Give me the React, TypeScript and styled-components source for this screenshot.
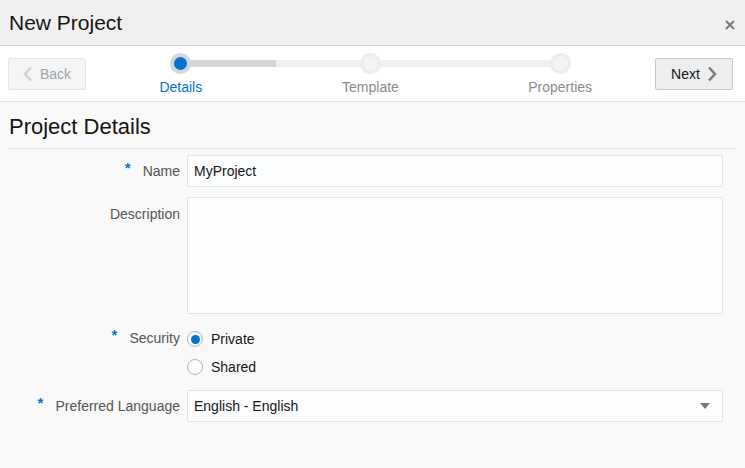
import styled, { createGlobalStyle } from 'styled-components';

const GlobalStyle = createGlobalStyle`
  html, body {
    margin: 0;
    padding: 0;
    background: #f9f9f9;
    font-family: "Liberation Sans", Arial, sans-serif;
    color: #161513;
  }
`;

interface IStep {
  title: string;
  state: 'current' | 'todo';
}

const STEPS: IStep[] = [
  { title: 'Details', state: 'current' },
  { title: 'Template', state: 'todo' },
  { title: 'Properties', state: 'todo' },
];

const Page = styled.div`
  width: 745px;
  height: 468px;
  background: #f9f9f9;
  overflow: hidden;
`;

const Header = styled.header`
  height: 45px;
  display: flex;
  align-items: center;
  justify-content: space-between;
  padding: 0 10px 0 9px;
  background: #f0f0f0;
  border-bottom: 1px solid #cdd5dc;
`;

const Title = styled.h1`
  margin: 0;
  font-size: 21px;
  font-weight: 400;
  color: #161513;
`;

const Close = styled.span`
  display: flex;
  margin-top: 4px;
  color: #7a7a7a;
`;

const Train = styled.div`
  height: 56px;
  display: flex;
  align-items: flex-start;
  padding: 12px 12px 0 8px;
  box-sizing: border-box;
  background: #fff;
  border-bottom: 1px solid #dfe3e6;
`;

const NavButton = styled.button<{ $disabled?: boolean }>`
  width: 78px;
  height: 32px;
  display: flex;
  align-items: center;
  justify-content: center;
  gap: 7px;
  padding: 0;
  font-family: inherit;
  font-size: 14px;
  border-radius: 2px;
  border: 1px solid ${(p) => (p.$disabled ? '#e4e7ea' : '#c6cbd0')};
  background: ${(p) => (p.$disabled ? '#f4f5f7' : '#eceef0')};
  color: ${(p) => (p.$disabled ? '#a3a3a3' : '#161513')};
  svg {
    color: ${(p) => (p.$disabled ? '#d2d2d2' : '#7a7a7a')};
  }
`;

const Steps = styled.div`
  flex: 1;
  display: grid;
  grid-template-columns: repeat(3, 1fr);
  position: relative;
`;

const Track = styled.div`
  position: absolute;
  top: 2px;
  left: 16.66%;
  right: 16.66%;
  height: 7px;
  background: #f0f0f0;
`;

const TrackFill = styled.div`
  width: 25%;
  height: 100%;
  background: #d6d6d6;
`;

const Step = styled.div`
  display: flex;
  flex-direction: column;
  align-items: center;
  position: relative;
  top: -5px;
`;

const Dot = styled.div<{ $current: boolean }>`
  width: 21px;
  height: 21px;
  border-radius: 50%;
  box-sizing: border-box;
  background: ${(p) => (p.$current ? '#0572ce' : '#f0f3f7')};
  border: ${(p) => (p.$current ? '4px solid #d6d6d6' : '3px solid #ececec')};
`;

const StepLabel = styled.span<{ $current: boolean }>`
  margin-top: 5px;
  font-size: 14px;
  color: ${(p) => (p.$current ? '#0572ce' : '#8b8b8b')};
`;

const Content = styled.main`
  padding: 10px 22px 0 8px;
`;

const SectionTitle = styled.h2`
  margin: 0 -13px 0 0;
  padding: 2px 0 8px 1px;
  font-size: 22px;
  font-weight: 400;
  color: #161513;
  border-bottom: 1px solid #dfe3e6;
`;

const Form = styled.div`
  display: grid;
  grid-template-columns: 172px 1fr;
  column-gap: 7px;
  row-gap: 10px;
  padding-top: 6px;
`;

const Label = styled.label<{ $top?: boolean }>`
  display: flex;
  justify-content: flex-end;
  align-items: ${(p) => (p.$top ? 'flex-start' : 'center')};
  padding-top: ${(p) => (p.$top ? '9px' : '0')};
  font-size: 14px;
  color: #545454;
  white-space: nowrap;
`;

const Required = styled.span`
  color: #0572ce;
  font-size: 15px;
  font-weight: 700;
  margin-right: 12px;
  position: relative;
  top: -4px;
`;

const Field = styled.div<{ $height?: number }>`
  height: ${(p) => p.$height ?? 32}px;
  box-sizing: border-box;
  display: flex;
  align-items: center;
  justify-content: space-between;
  padding: 0 12px 0 6px;
  background: #fcfdfe;
  border: 1px solid #dfe4e7;
  border-radius: 2px;
  font-size: 14px;
  color: #161513;
`;

const Radios = styled.div`
  display: flex;
  flex-direction: column;
  gap: 12px;
  padding: 7px 0 5px;
`;

const RadioRow = styled.div`
  display: flex;
  align-items: center;
  gap: 8px;
  font-size: 14px;
  color: #161513;
`;

const RadioCircle = styled.span<{ $checked: boolean }>`
  width: 16px;
  height: 16px;
  box-sizing: border-box;
  border-radius: 50%;
  border: 1px solid #aeb4b9;
  background: #fff;
  display: flex;
  align-items: center;
  justify-content: center;
  &::after {
    content: '';
    display: ${(p) => (p.$checked ? 'block' : 'none')};
    width: 9px;
    height: 9px;
    border-radius: 50%;
    background: #0572ce;
  }
`;

const SecurityLabel = styled(Label)`
  align-items: flex-start;
  padding-top: 6px;
`;

function App() {
  return (
    <Page>
      <GlobalStyle />
      <Header>
        <Title>New Project</Title>
        <Close>
          <svg width="10" height="10" viewBox="0 0 10 10">
            <path d="M1 1L9 9M9 1L1 9" stroke="currentColor" strokeWidth="2" />
          </svg>
        </Close>
      </Header>

      <Train>
        <NavButton $disabled>
          <svg width="10" height="16" viewBox="0 0 10 16">
            <path d="M8 1.5L2 8l6 6.5" fill="none" stroke="currentColor" strokeWidth="2.5" />
          </svg>
          Back
        </NavButton>
        <Steps>
          <Track>
            <TrackFill />
          </Track>
          {STEPS.map((s) => (
            <Step key={s.title}>
              <Dot $current={s.state === 'current'} />
              <StepLabel $current={s.state === 'current'}>{s.title}</StepLabel>
            </Step>
          ))}
        </Steps>
        <NavButton>
          Next
          <svg width="10" height="16" viewBox="0 0 10 16">
            <path d="M2 1.5L8 8l-6 6.5" fill="none" stroke="currentColor" strokeWidth="2.5" />
          </svg>
        </NavButton>
      </Train>

      <Content>
        <SectionTitle>Project Details</SectionTitle>
        <Form>
          <Label>
            <Required>*</Required>Name
          </Label>
          <Field>MyProject</Field>

          <Label $top>Description</Label>
          <Field $height={117} />

          <SecurityLabel>
            <Required>*</Required>Security
          </SecurityLabel>
          <Radios>
            <RadioRow>
              <RadioCircle $checked />
              Private
            </RadioRow>
            <RadioRow>
              <RadioCircle $checked={false} />
              Shared
            </RadioRow>
          </Radios>

          <Label>
            <Required>*</Required>Preferred Language
          </Label>
          <Field>
            English - English
            <svg width="10" height="6" viewBox="0 0 10 6">
              <path d="M0 0h10L5 6z" fill="#7a7a7a" />
            </svg>
          </Field>
        </Form>
      </Content>
    </Page>
  );
}

export default App;
